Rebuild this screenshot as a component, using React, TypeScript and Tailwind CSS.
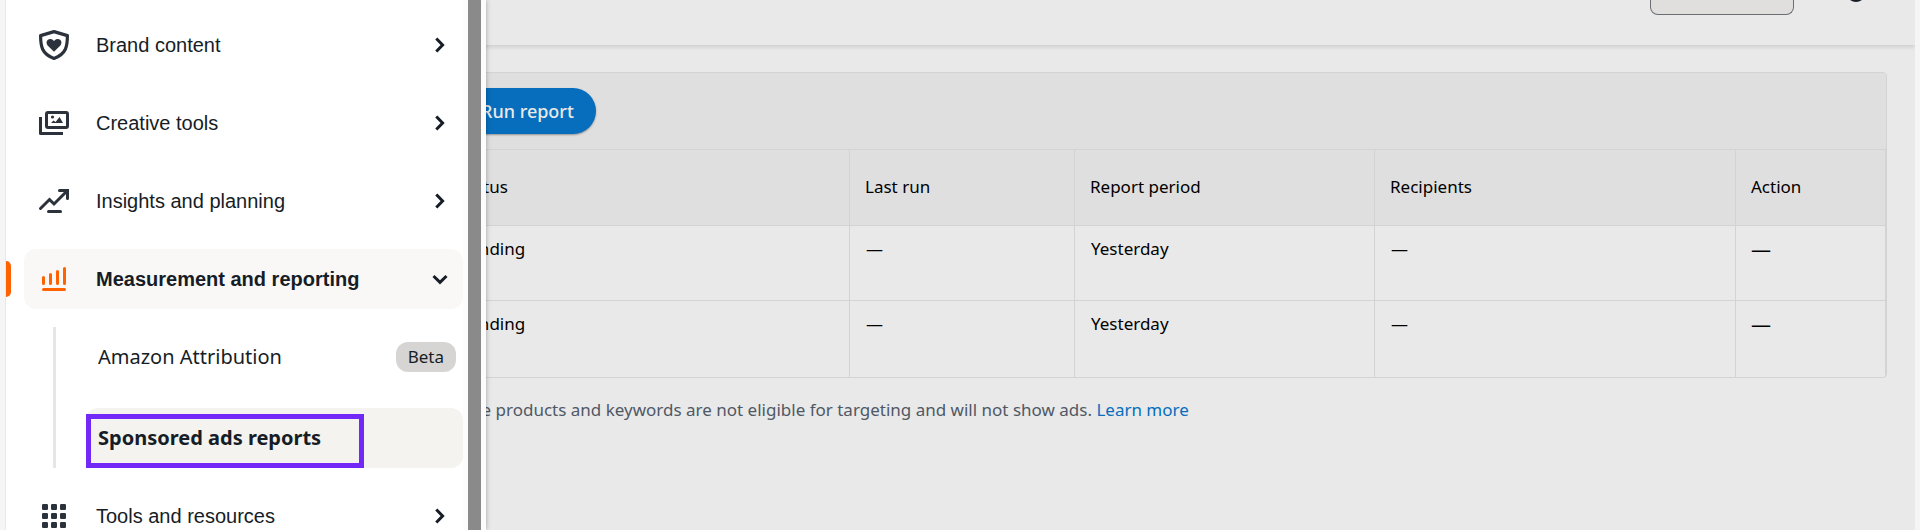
import type { ReactNode } from "react";

const ember = "font-['Noto_Sans',sans-serif]";

function Chevron({ down = false }: { down?: boolean }) {
  return (
    <svg width="16" height="16" viewBox="0 0 16 16" fill="none" stroke="#161d26" strokeWidth="3" aria-hidden="true">
      {down ? <path d="M1.5 5 8 11.3 14.5 5" /> : <path d="M4.3 1.5 10.6 8 4.3 14.5" />}
    </svg>
  );
}

function ShieldIcon() {
  return (
    <svg width="32" height="32" viewBox="0 0 32 32" aria-hidden="true">
      <path
        d="M16 2.6 29.4 6.6C29.4 17 28.4 25 16 29.4 3.6 25 2.6 17 2.6 6.6Z"
        fill="none"
        stroke="#2b323b"
        strokeWidth="3.2"
        strokeLinejoin="round"
      />
      <path
        d="M16 22.8 9.6 16.4C8.2 14.8 8.2 12.4 9.6 11.1 11.3 9.5 13.8 9.7 15.2 11.2L16 12 16.8 11.2C18.2 9.7 20.7 9.5 22.4 11.1 23.8 12.4 23.8 14.8 22.4 16.4Z"
        fill="#2b323b"
      />
    </svg>
  );
}

function GalleryIcon() {
  return (
    <svg width="32" height="32" viewBox="0 0 32 32" aria-hidden="true">
      <g fill="none" stroke="#2b323b" strokeWidth="3">
        <rect x="8.5" y="5.5" width="21" height="15" rx="1.5" />
        <path d="M2.5 10V26.5H25" strokeLinejoin="round" />
      </g>
      <circle cx="14.5" cy="10" r="1.6" fill="#2b323b" />
      <path d="M13 16 15.5 13.4 17.6 15 21.5 10 25 16Z" fill="#2b323b" />
    </svg>
  );
}

function TrendIcon() {
  return (
    <svg width="32" height="32" viewBox="0 0 32 32" fill="none" stroke="#2b323b" strokeWidth="3" strokeLinecap="round" aria-hidden="true">
      <path d="M2.5 23.5 11.5 14.5 16 19 29 6" />
      <path d="M21.5 5.5H29.5V13.5" />
      <path d="M10.5 26.5H22.5" />
    </svg>
  );
}

function BarsIcon() {
  return (
    <svg width="32" height="32" viewBox="0 0 32 32" fill="none" stroke="#ff6200" strokeWidth="3" strokeLinecap="round" aria-hidden="true">
      <path d="M5.5 14.5V20.5M12.5 11.5V20.5M19.5 8.5V20.5M26.5 5.5V20.5M5.5 26.5H26.5" />
    </svg>
  );
}

function GridIcon() {
  return (
    <svg width="32" height="32" viewBox="0 0 32 32" fill="#2b323b" aria-hidden="true">
      {[4, 13, 22].map((y) => [4, 13, 22].map((x) => <rect key={`${x}-${y}`} x={x} y={y} width="6" height="6" rx="1.2" />))}
    </svg>
  );
}

function NavItem({ icon, label, open = false }: { icon: ReactNode; label: string; open?: boolean }) {
  return (
    <button
      type="button"
      aria-expanded={open}
      className={`flex h-[60px] w-full shrink-0 items-center rounded-xl pr-[15px] pl-[14px] text-left text-xl ${
        open ? "bg-[#f9f8f6] font-bold" : ""
      }`}
    >
      {icon}
      <span className="ml-[26px] flex-1">{label}</span>
      <Chevron down={open} />
    </button>
  );
}

function Drawer() {
  return (
    <aside className="absolute inset-y-0 left-0 flex w-[486px] border-l-5 border-[#f5f5f5] bg-white shadow-[0_0_5px_rgba(0,0,0,0.3)]">
      <nav className="flex flex-1 flex-col gap-[18px] border-l border-[#e9e9e9] pt-[15px] pl-[18px] font-['Liberation_Sans',Arial,sans-serif] text-[#161d26]">
        <NavItem icon={<ShieldIcon />} label="Brand content" />
        <NavItem icon={<GalleryIcon />} label="Creative tools" />
        <NavItem icon={<TrendIcon />} label="Insights and planning" />
        <div className="relative">
          <NavItem icon={<BarsIcon />} label="Measurement and reporting" open />
          <span className="absolute top-3 -left-[18px] h-9 w-[5px] rounded-r-md bg-[#ff6200]" />
        </div>
        <ul className={`ml-[29px] flex flex-col gap-[21px] border-l-3 border-[#e6e6e6] pl-[30px] text-[20px] ${ember}`}>
          <li>
            <a href="#attribution" className="flex h-[60px] items-center justify-between pr-[7px] pl-3">
              Amazon Attribution
              <span className="flex h-[30px] items-center rounded-xl bg-[#d6d5d3] px-3 text-[17px]">Beta</span>
            </a>
          </li>
          <li className="relative">
            <a href="#reports" className="flex h-[60px] items-center rounded-xl bg-[#f4f3ef] pl-3 font-bold">
              Sponsored ads reports
            </a>
            <span className="absolute top-[6px] bottom-0 left-0 w-[278px] border-5 border-[#7229f7]" />
          </li>
        </ul>
        <NavItem icon={<GridIcon />} label="Tools and resources" />
      </nav>
      <div className="w-[5px] bg-[#fcfcfc]" />
      <div className="w-[13px] bg-[#8a8a8a]" />
      <div className="w-[5px] bg-[#fcfcfc]" />
    </aside>
  );
}

const headers = ["Status", "Last run", "Report period", "Recipients", "Action"];
const rows = [
  ["Pending", "—", "Yesterday", "—", "—"],
  ["Pending", "—", "Yesterday", "—", "—"],
];

export default function App() {
  return (
    <div className={`relative flex h-screen flex-col overflow-hidden border-r-5 border-[#f5f5f5] bg-[#e9e9e9] text-black ${ember}`}>
      <header className="flex h-[45px] shrink-0 items-start justify-end gap-14 pr-[53px] shadow-[0_2px_4px_rgba(0,0,0,0.12)]">
        <button type="button" aria-label="Options" className="h-[15px] w-36 rounded-b-lg border border-t-0 border-[#6a6d72] bg-[#e0dfdd]" />
        <svg width="12" height="3" viewBox="0 0 12 3" aria-hidden="true">
          <path d="M0 0H12Q6 4 0 0Z" fill="#161d26" />
        </svg>
      </header>
      <main className="pt-[27px] pr-7 pl-[442px]">
        <section className="overflow-hidden rounded border border-[#d3d3d3]">
          <div className="flex h-[76px] items-center bg-[#dfdfdf] pl-4">
            <button type="button" className="h-[46px] rounded-full bg-[#066ebd] px-[22px] text-[18px] font-medium text-[#e9e9e9] shadow-[0_1px_2px_rgba(0,0,0,0.35)]">
              Run report
            </button>
          </div>
          <table className="w-full table-fixed text-left text-[17px]">
            <colgroup>
              <col />
              <col className="w-[225px]" />
              <col className="w-[300px]" />
              <col className="w-[361px]" />
              <col className="w-[150px]" />
            </colgroup>
            <thead className="bg-[#dfdfdf]">
              <tr className="h-[76px] border-y border-[#d3d3d3]">
                {headers.map((h) => (
                  <th key={h} className="border-r border-[#d3d3d3] px-[15px] pb-0.5 font-normal">
                    {h}
                  </th>
                ))}
              </tr>
            </thead>
            <tbody>
              {rows.map((row, r) => (
                <tr key={r} className="h-[75px] border-b border-[#d3d3d3] last:h-[76px] last:border-b-0">
                  {row.map((cell, c) => (
                    <td key={c} className="border-r border-[#d3d3d3] px-4 pt-[10px] align-top last:px-[15px] last:text-xl">
                      {cell}
                    </td>
                  ))}
                </tr>
              ))}
            </tbody>
          </table>
        </section>
        <p className="mt-[19px] pl-1 text-[17px] whitespace-nowrap text-[#4f5865]">
          Some products and keywords are not eligible for targeting and will not show ads.{" "}
          <a href="#learn" className="text-[#066ebd]">
            Learn more
          </a>
        </p>
      </main>
      <Drawer />
    </div>
  );
}
